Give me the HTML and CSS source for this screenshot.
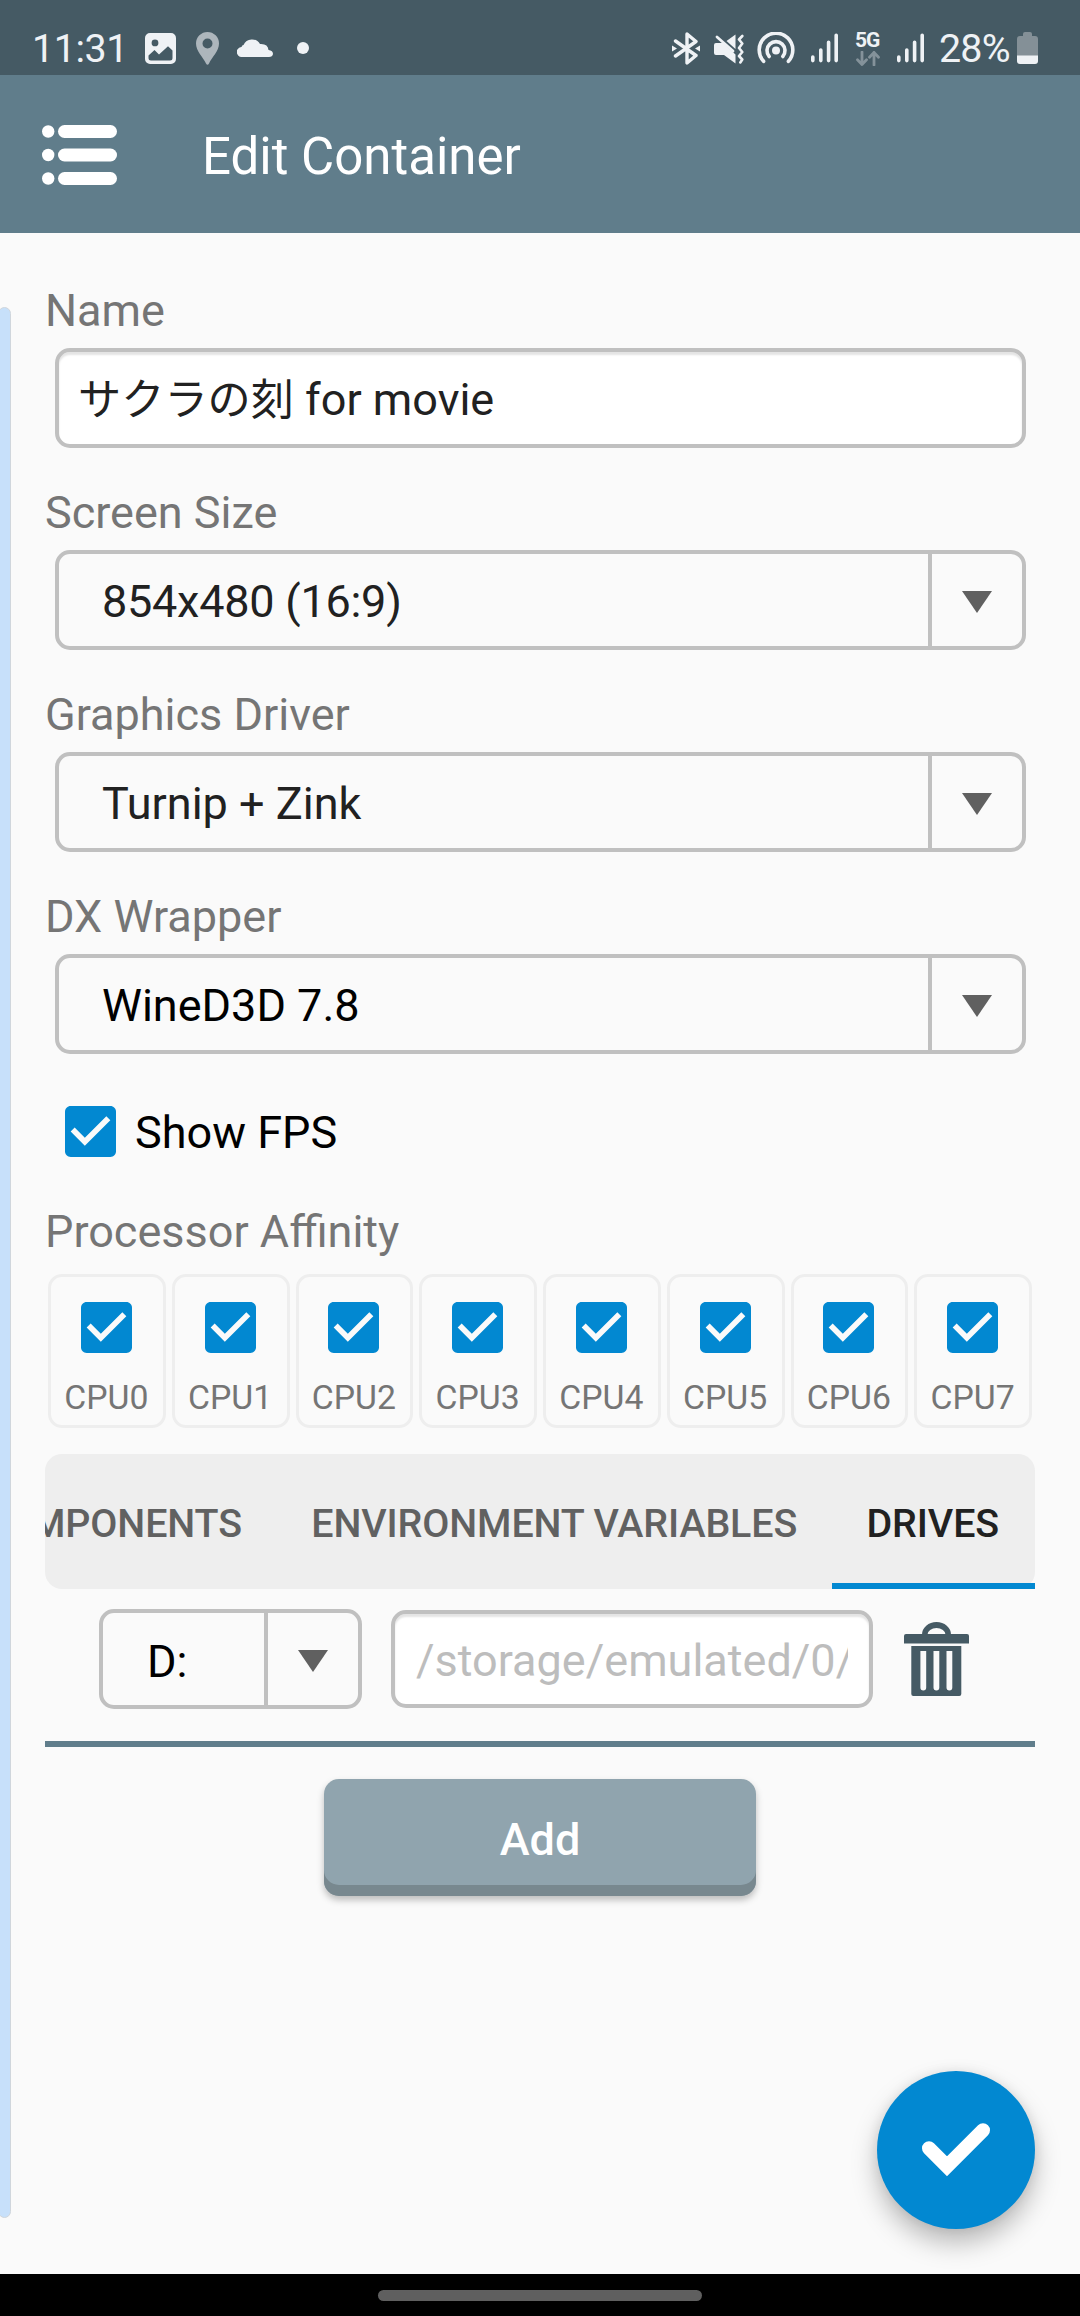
FILE: index.html
```html
<!DOCTYPE html>
<html lang="en">
<head>
<meta charset="utf-8">
<title>Edit Container</title>
<link rel="stylesheet" href="styles.css">
</head>
<body>
<svg class="defs" aria-hidden="true">
  <symbol id="checkbox" viewBox="3 3 18 18">
    <path fill="#0288d1" d="M19 3H5c-1.11 0-2 .9-2 2v14c0 1.1.89 2 2 2h14c1.11 0 2-.9 2-2V5c0-1.1-.89-2-2-2z"/>
    <path fill="#fafafa" d="M10 17l-5-5 1.41-1.41L10 14.17l7.59-7.59L19 8z"/>
  </symbol>
  <symbol id="arrow" viewBox="0 0 30 22"><path fill="#606060" d="M0 0h30L15 22z"/></symbol>
  <symbol id="signal" viewBox="0 0 27 30">
    <path fill="none" stroke="#eff2f5" stroke-width="3.6" stroke-linecap="round" d="M1.8 24v3.6M9.8 17v10.6M17.6 9.3v18.3M25.2 2.3v25.3"/>
  </symbol>
</svg>

<header class="status">
  <div class="status-left">
    <span class="clock">11:31</span>
    <svg class="ic-image" viewBox="0 0 31 31"><path fill="#eff2f5" fill-rule="evenodd" d="M5 0h21a5 5 0 0 1 5 5v21a5 5 0 0 1-5 5H5a5 5 0 0 1-5-5V5a5 5 0 0 1 5-5zM10 6.500a3.400 3.400 0 1 0 0 6.800a3.400 3.400 0 0 0 0-6.800zM3.500 22.500V25a2.500 2.500 0 0 0 2.500 2.500h19a2.500 2.500 0 0 0 2.500-2.500V17.500L23 13.200L14 21.500L9.500 17z"/></svg>
    <svg class="ic-pin" viewBox="0 0 23 33"><path fill="#adb6bc" fill-rule="evenodd" d="M11.500 0A11.500 11.500 0 0 0 0 11.500C0 19 7 25 10 31.500q1.500 2.500 3 0C16 25 23 19 23 11.500A11.500 11.500 0 0 0 11.500 0zm0 6.500a5 5 0 1 1 0 10a5 5 0 0 1 0-10z"/></svg>
    <svg class="ic-cloud" viewBox="0 0 36 20"><path fill="#eff2f5" d="M5 20a5 5 0 0 1-.5-10Q5 8 6.500 8A9.300 9.300 0 0 1 23 7Q31 6.500 31.500 13Q36 13.500 36 17Q35.500 20 32 20z"/></svg>
    <span class="dot"></span>
  </div>
  <div class="status-right">
    <svg class="ic-bt" viewBox="0 0 28 33"><g fill="none" stroke="#eff2f5" stroke-width="3.400" stroke-linejoin="round" stroke-linecap="round"><path d="M3.500 9L24 23.500L15 31V2l9 7.500L3.500 24"/></g><path fill="#eff2f5" d="M0 13.500l5 3l-5 3zM28 13.500l-5 3l5 3z"/></svg>
    <svg class="ic-mute" viewBox="0 0 30 30"><path fill="#eff2f5" d="M2 9h7l12.500 11.500V29.500L10 21H2q-2 0-2-2v-8q0-2 2-2zM12.500 7L21.500.5V15z"/><g fill="none" stroke="#eff2f5" stroke-linecap="round" stroke-linejoin="round"><path stroke-width="2.800" d="M3 3L19 17"/><path stroke-width="2.600" d="M28.300 2l-3.300 3.500l3.300 4l-3.300 4.500l3.300 4l-3.300 4l3.300 3.500l-2 3"/></g></svg>
    <svg class="ic-hotspot" viewBox="0 0 38 32"><g fill="none" stroke="#eff2f5" stroke-width="3.600" stroke-linecap="round"><path d="M6.600 29.300A16.800 16.800 0 1 1 31.400 29.300"/><path d="M12.200 24.500A9 9 0 1 1 25.800 24.500"/></g><circle cx="19" cy="18.500" r="4" fill="#eff2f5"/></svg>
    <svg class="ic-signal"><use href="#signal"/></svg>
    <div class="net"><span>5G</span><svg viewBox="0 0 24 15"><path fill="none" stroke="#84929a" stroke-width="2.800" stroke-linecap="round" stroke-linejoin="round" d="M6 1v12.500M1.500 8.800L6 13.500l4.500-4.700M18 14V1.500M13.500 6.200L18 1.500l4.500 4.700"/></svg></div>
    <svg class="ic-signal"><use href="#signal"/></svg>
    <span class="percent">28%</span>
    <svg class="ic-battery" viewBox="0 0 21 32"><path fill="#849097" d="M6 2q0-2 2-2h5q2 0 2 2v2h3q3 0 3 3v17H0V7q0-3 3-3h3z"/><path fill="#eff2f5" d="M0 23.500h21V29q0 3-3 3H3q-3 0-3-3z"/></svg>
  </div>
</header>

<nav class="appbar">
  <svg class="ic-menu" viewBox="0 0 75 60"><g fill="#fff"><circle cx="6.200" cy="6.500" r="6.200"/><circle cx="6.200" cy="30" r="6.200"/><circle cx="6.200" cy="53.500" r="6.200"/><rect x="16" y="0" width="59" height="13" rx="6.500"/><rect x="16" y="23.500" width="59" height="13" rx="6.500"/><rect x="16" y="47" width="59" height="13" rx="6.500"/></g></svg>
  <h1>Edit Container</h1>
</nav>

<main class="content">
  <div class="edge-panel"></div>

  <section class="field">
    <label>Name</label>
    <div class="input"><span class="text"><span class="ja" lang="ja">サクラの刻</span> for movie</span></div>
  </section>
  <section class="field">
    <label>Screen Size</label>
    <div class="select"><span class="value size">854x480 (16:9)</span><span class="drop"><svg><use href="#arrow"/></svg></span></div>
  </section>
  <section class="field">
    <label>Graphics Driver</label>
    <div class="select"><span class="value">Turnip + Zink</span><span class="drop"><svg><use href="#arrow"/></svg></span></div>
  </section>
  <section class="field">
    <label>DX Wrapper</label>
    <div class="select"><span class="value strong">WineD3D 7.8</span><span class="drop"><svg><use href="#arrow"/></svg></span></div>
  </section>

  <div class="fps"><svg class="check"><use href="#checkbox"/></svg><span>Show FPS</span></div>

  <section class="affinity">
    <label>Processor Affinity</label>
    <div class="cpus">
      <div class="cpu"><svg class="check"><use href="#checkbox"/></svg><span>CPU0</span></div>
      <div class="cpu"><svg class="check"><use href="#checkbox"/></svg><span>CPU1</span></div>
      <div class="cpu"><svg class="check"><use href="#checkbox"/></svg><span>CPU2</span></div>
      <div class="cpu"><svg class="check"><use href="#checkbox"/></svg><span>CPU3</span></div>
      <div class="cpu"><svg class="check"><use href="#checkbox"/></svg><span>CPU4</span></div>
      <div class="cpu"><svg class="check"><use href="#checkbox"/></svg><span>CPU5</span></div>
      <div class="cpu"><svg class="check"><use href="#checkbox"/></svg><span>CPU6</span></div>
      <div class="cpu"><svg class="check"><use href="#checkbox"/></svg><span>CPU7</span></div>
    </div>
  </section>

  <div class="tabs">
    <div class="tab-strip">
      <span class="tab">COMPONENTS</span>
      <span class="tab">ENVIRONMENT VARIABLES</span>
      <span class="tab active">DRIVES</span>
    </div>
  </div>

  <div class="drive">
    <div class="select letter"><span class="value strong">D:</span><span class="drop"><svg><use href="#arrow"/></svg></span></div>
    <div class="input path"><span class="text">/storage/emulated/0/</span></div>
    <svg class="trash" viewBox="0 0 65 74"><g fill="#455a64"><path fill-rule="evenodd" d="M18 12.500A14.500 12.500 0 0 1 47 12.500h-5.500A9 6.500 0 0 0 23.500 12.500z"/><path d="M2 12h61q2 0 2 2v7.500H0V14q0-2 2-2z"/><path fill-rule="evenodd" d="M7.300 24h50v48q0 2-2 2h-46q-2 0-2-2zM16.400 29v36.500a2.900 2.900 0 0 0 5.800 0V29zM29.500 29v36.500a2.900 2.900 0 0 0 5.800 0V29zM42.500 29v36.500a2.900 2.900 0 0 0 5.800 0V29z"/></g></svg>
  </div>
  <div class="rule"></div>
  <button class="add">Add</button>

  <div class="fab"><svg viewBox="0 0 158 158"><path fill="none" stroke="#fff" stroke-width="14" stroke-linecap="round" d="M52 77.300L70 95.300L106 59.300"/></svg></div>
</main>

<footer class="navbar"><span class="pill"></span></footer>
</body>
</html>
```

FILE: styles.css
```css
* { box-sizing: border-box; }

body {
  margin: 0;
  width: 1080px;
  height: 2316px;
  display: flex;
  flex-direction: column;
  overflow: hidden;
  background: #fafafa;
  font: 45px/53px Roboto, "Noto Sans CJK JP", sans-serif;
  color: #212121;
}

svg { display: block; flex: none; }
.defs { position: absolute; width: 0; height: 0; }

/* status bar */
.status {
  height: 75px;
  flex: none;
  padding: 0 42px 0 32px;
  display: flex;
  justify-content: space-between;
  background: #455a64;
  color: #eff2f5;
  font-size: 39.4px;
  line-height: 46px;
}
.status-left, .status-right { display: flex; align-items: flex-start; }
.clock { width: 113px; margin-top: 26px; white-space: nowrap; letter-spacing: -.4px; }
.ic-image { width: 31px; height: 31px; margin-top: 33px; }
.ic-pin { width: 23px; height: 33px; margin: 32px 0 0 20px; }
.ic-cloud { width: 36px; height: 20px; margin: 37px 0 0 18px; }
.dot { width: 12px; height: 12px; margin: 42px 0 0 24px; border-radius: 50%; background: #eff2f5; }
.ic-bt { width: 28px; height: 33px; margin-top: 32px; }
.ic-mute { width: 30px; height: 30px; margin: 34px 0 0 14px; }
.ic-hotspot { width: 38px; height: 32px; margin: 32px 0 0 13px; }
.ic-signal { width: 27px; height: 30px; margin: 33px 0 0 16px; }
.net { width: 26px; margin: 30px 0 0 17px; font-size: 21px; font-weight: 700; line-height: 20px; letter-spacing: -1px; }
.net svg { width: 24px; height: 15px; margin: 1px 0 0 1px; }
.percent { width: 78px; margin: 26px 0 0 15px; letter-spacing: -.8px; }
.ic-battery { width: 21px; height: 32px; margin-top: 32px; }

/* app bar */
.appbar {
  height: 158px;
  flex: none;
  padding-left: 42px;
  display: flex;
  align-items: center;
  gap: 85px;
  background: #607d8b;
}
.ic-menu { width: 75px; height: 60px; margin-top: 1px; }
h1 { margin: 5px 0 0; color: #fff; font-size: 51px; font-weight: 400; line-height: 60px; }

/* form */
.content {
  position: relative;
  flex: 1;
  padding: 51px 45px 0;
  display: flex;
  flex-direction: column;
}
.edge-panel {
  position: absolute;
  left: -2px;
  top: 74px;
  width: 13px;
  height: 1911px;
  border: 1.500px solid #d0d6dc;
  border-radius: 7px;
  background: #c7e0fa;
}
label { display: block; color: #757575; }
.field { margin-bottom: 38px; }
.field .input, .field .select { margin: 11px 9px 0 10px; }
.input, .select { height: 100px; border: 4px solid #c0c0c0; border-radius: 15px; display: flex; }
.input { padding: 3px 19px 0; align-items: center; background: #fff; box-shadow: inset 0 3px 2px #e4e4e4; }
.text { overflow: hidden; white-space: nowrap; }
.ja { font-size: 43.200px; font-weight: 400; }
.value { flex: 1; padding: 21px 0 0 43px; }
.size { letter-spacing: -.25px; }
.strong { color: #000; }
.drop {
  width: 94px;
  border-left: 4px solid #c0c0c0;
  display: flex;
  align-items: center;
  justify-content: center;
}
.drop svg { width: 30px; height: 22px; margin: 4px 0 0; }

.check { width: 51px; height: 51px; }
.fps { margin-top: 14px; padding-left: 20px; display: flex; gap: 19px; color: #000; }

.affinity { margin-top: 46px; }
.cpus { margin-top: 16px; display: grid; grid-template-columns: repeat(8, 1fr); }
.cpu {
  height: 154px;
  margin: 0 3px;
  padding: 25px 1px 0 0;
  border: 3px solid #eee;
  border-radius: 14px;
  display: flex;
  flex-direction: column;
  align-items: center;
  gap: 25px;
  color: #757575;
  font-size: 33.750px;
  line-height: 40px;
}

/* tabs */
.tabs { height: 135px; margin-top: 26px; border-radius: 17px; background: #eee; }
.tab-strip { height: 135px; overflow: hidden; display: flex; justify-content: flex-end; }
.tab {
  flex: none;
  padding: 47px 34.700px 0;
  color: #616161;
  font-size: 39.400px;
  font-weight: 500;
  line-height: 46px;
  letter-spacing: -.12px;
  white-space: nowrap;
}
.active { padding-right: 36px; color: #212121; border-bottom: 6px solid #0288d1; }

/* drives */
.drive { height: 100px; margin: 20px 0 32px 54px; display: flex; }
.letter { width: 263px; }
.letter .value { padding: 22px 0 0 44px; }
.path { width: 482px; height: 98px; margin: 1px 0 0 29px; padding: 2px 21px 0; color: #bdbdbd; }
.trash { width: 65px; height: 74px; margin: 13px 0 0 31px; }
.rule { height: 6px; background: #607d8b; }

.add {
  width: 432px;
  height: 117px;
  margin: 32px auto 0;
  padding: 3px 0 0;
  border: 0;
  border-radius: 15px;
  background: #90a4ae;
  box-shadow: inset 0 -11px #78888f, 0 4px 7px rgba(0, 0, 0, .25);
  color: #fff;
  font: 500 45px/53px Roboto, sans-serif;
}

.fab {
  position: absolute;
  left: 877px;
  top: 1838px;
  width: 158px;
  height: 158px;
  border-radius: 50%;
  background: #0288d1;
  box-shadow: 0 14px 26px rgba(0, 0, 0, .26), 0 0 12px rgba(0, 0, 0, .08);
}

/* gesture bar */
.navbar {
  position: relative;
  height: 42px;
  flex: none;
  padding-top: 16px;
  background: #000;
}
.pill { display: block; width: 324px; height: 11px; margin: 0 auto; border-radius: 6px; background: #5f5f5f; }
```
